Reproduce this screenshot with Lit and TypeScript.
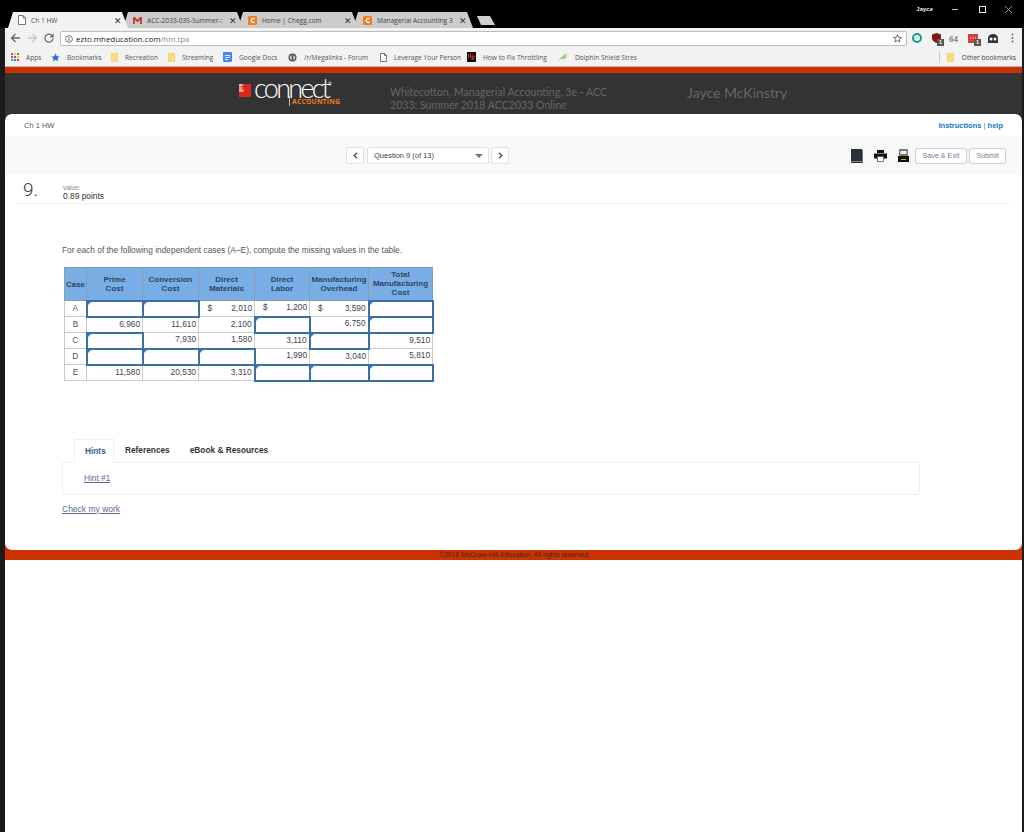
import { LitElement, html, css, svg } from 'lit';
import { customElement } from 'lit/decorators.js';
import { classMap } from 'lit/directives/class-map.js';

type IconName = 'page' | 'gmail' | 'chegg';

const TABS: { title: string; icon: IconName; active?: boolean }[] = [
  { title: 'Ch 1 HW', icon: 'page', active: true },
  { title: 'ACC-2033-03S-Summer-:', icon: 'gmail' },
  { title: 'Home | Chegg.com', icon: 'chegg' },
  { title: 'Managerial Accounting 3', icon: 'chegg' },
];

/** Bookmark bar entries: w is the slot width, so the labels land where Chrome put them. */
const BOOKMARKS: { label: string; icon: string; w: number }[] = [
  { label: 'Apps', icon: 'apps', w: 40 },
  { label: 'Bookmarks', icon: 'star', w: 60 },
  { label: 'Recreation', icon: 'folder', w: 57 },
  { label: 'Streaming', icon: 'folder', w: 55 },
  { label: 'Google Docs', icon: 'docs', w: 65 },
  { label: '/r/Megalinks - Forum', icon: 'disc', w: 92 },
  { label: 'Leverage Your Person', icon: 'page', w: 87 },
  { label: 'How to Fix Throttling', icon: 'ur', w: 91 },
  { label: 'Dolphin Shield Stres', icon: 'leaf', w: 90 },
];

const COLS = [22, 56, 56, 56, 55, 59, 64];

/** null marks an input cell; a dollar amount is written as ['$', value]. */
const ROWS: (string | null | [string, string])[][] = [
  ['A', null, null, ['$', '2,010'], ['$', '1,200'], ['$', '3,590'], null],
  ['B', '6,960', '11,610', '2,100', null, '6,750', null],
  ['C', null, '7,930', '1,580', '3,110', null, '9,510'],
  ['D', null, null, null, '1,990', '3,040', '5,810'],
  ['E', '11,580', '20,530', '3,310', null, null, null],
];

@customElement('app-root')
export class AppRoot extends LitElement {
  static styles = css`
    :host {
      display: block;
      width: 1024px;
      height: 832px;
      overflow: hidden;
      font-family: 'Liberation Sans', Arial, sans-serif;
      background: #fff;
    }
    .frame {
      display: flex;
      flex-direction: column;
      height: 832px;
      background: #1b1b1b;
    }
    /* window title bar and tabs */
    .titlebar {
      display: flex;
      align-items: flex-end;
      height: 28px;
      padding-left: 8px;
      background: #000;
      position: relative;
    }
    .tab {
      display: flex;
      align-items: center;
      box-sizing: border-box;
      width: 120px;
      height: 16px;
      margin-right: -5px;
      padding: 0 6px 0 10px;
      background: #cccccc;
      clip-path: polygon(5px 0, 114px 0, 120px 100%, 0 100%);
      font: 6.6px 'Open Sans', sans-serif;
      color: #444;
      white-space: nowrap;
    }
    .tab.active {
      background: #f2f2f2;
      position: relative;
      z-index: 1;
    }
    .tab .name {
      flex: 1;
      min-width: 0;
      overflow: hidden;
      margin-left: 5px;
    }
    .tab .x {
      font-size: 8.5px;
      color: #333;
      margin-left: 4px;
    }
    .newtab {
      width: 18px;
      height: 9px;
      margin: 0 0 3px 9px;
      background: #cfcfcf;
      clip-path: polygon(0 0, 13px 0, 18px 100%, 4px 100%);
    }
    .winctl {
      position: absolute;
      top: 0;
      right: 0;
      height: 18px;
      display: flex;
      align-items: center;
      color: #ddd;
    }
    .winctl .user {
      font-size: 6px;
      font-weight: 700;
      color: #eee;
      margin-right: 19px;
    }
    .winctl .min {
      width: 6px;
      height: 1px;
      background: #ccc;
      margin-right: 21px;
    }
    .winctl .max {
      width: 5px;
      height: 5px;
      border: 1px solid #eee;
      margin-right: 19px;
    }
    .winctl svg {
      margin-right: 12px;
    }

    /* toolbar */
    .chrome {
      margin: 0 2px 0 5px;
      background: #f2f2f2;
    }
    .toolbar {
      display: flex;
      align-items: center;
      height: 20px;
    }
    .navs {
      display: flex;
      align-items: center;
      gap: 6px;
      width: 55px;
      padding-left: 5px;
      box-sizing: border-box;
    }
    .omni {
      display: flex;
      align-items: center;
      box-sizing: border-box;
      width: 847px;
      height: 15px;
      margin-top: 1px;
      padding: 0 4px 0 4px;
      background: #fff;
      border: 1px solid #bdbdbd;
      border-radius: 2px;
      font: 7.9px 'Open Sans', sans-serif;
      color: #222;
    }
    .omni .url {
      flex: 1;
      margin-left: 3px;
    }
    .omni .path {
      color: #888;
    }
    .exts {
      display: flex;
      align-items: center;
      flex: 1;
      padding-left: 5px;
      position: relative;
    }
    .exts > * {
      flex: none;
    }
    .ext-green {
      margin-right: 10px;
    }
    .ext-shield {
      margin-right: 8px;
    }
    .ext-adblock {
      margin-right: 10px;
    }
    .ext-ghost {
      margin-right: 13px;
    }
    .ext64 {
      font: 700 8px 'Open Sans', sans-serif;
      color: #8b8b8b;
      width: 12px;
      margin-right: 7px;
    }
    .badge-host {
      position: relative;
      display: flex;
    }
    .badge {
      position: absolute;
      right: -3px;
      bottom: -3px;
      width: 7px;
      height: 7px;
      background: #555;
      color: #fff;
      font: 700 5.5px/7px 'Liberation Sans', sans-serif;
      text-align: center;
    }

    /* bookmarks */
    .bookmarks {
      display: flex;
      align-items: center;
      height: 18px;
      padding-left: 6px;
      font: 6.6px 'Open Sans', sans-serif;
      color: #555;
      white-space: nowrap;
    }
    .bm {
      display: flex;
      align-items: center;
      gap: 7px;
      box-sizing: border-box;
      flex: none;
      overflow: hidden;
    }
    .bm span {
      overflow: hidden;
    }
    .bm-fill {
      flex: 1;
    }
    .bm-sep {
      width: 1px;
      height: 12px;
      background: #ccc;
      margin-right: 7px;
    }
    .bm-other {
      display: flex;
      align-items: center;
      gap: 8px;
      color: #444;
      margin-right: 6px;
    }

    /* site */
    .site {
      display: flex;
      flex-direction: column;
      flex: 1;
      margin: 0 2px 0 5px;
      background: #fff;
    }
    .redbar {
      height: 6px;
      background: #cc3300;
      border-top: 1px solid #b9b9b9;
    }
    .masthead {
      display: flex;
      height: 41px;
      background: #333333;
    }
    .logo {
      position: relative;
      display: flex;
      align-items: flex-start;
      width: 151px;
      margin-left: 234px;
      padding-top: 11px;
      box-sizing: border-box;
    }
    .logo .mh {
      width: 12px;
      height: 13px;
      background: #d8281c;
      color: #fff;
      font: 700 3px/3.2px 'Liberation Sans', sans-serif;
      overflow: hidden;
    }
    .logo .word {
      font: 300 27px/13px 'Lato', sans-serif;
      letter-spacing: -2.7px;
      color: #fff;
      margin-left: 3px;
      margin-top: -3px;
    }
    .logo sup {
      position: absolute;
      left: 89px;
      top: 8px;
      font: 5px 'Liberation Sans', sans-serif;
      color: #fff;
    }
    .logo .sub {
      position: absolute;
      left: 50px;
      top: 23px;
      padding: 1px 0 0 2px;
      border-left: 1px solid #bbb;
      font: 700 6.8px/9px 'Open Sans', sans-serif;
      color: #f47b20;
      letter-spacing: 0.2px;
    }
    .course {
      width: 297px;
      padding-top: 13px;
      font: 10.6px/13px 'Lato', sans-serif;
      color: #666;
    }
    .who {
      padding-top: 11px;
      font: 14px/18px 'Lato', sans-serif;
      color: #666;
    }
    .sheet-bg {
      display: flex;
      flex-direction: column;
      height: 436px;
      background: linear-gradient(#333 50%, #cc3300 50%);
    }
    .sheet {
      flex: 1;
      background: #fff;
      border-radius: 7px;
    }
    .crumbs {
      display: flex;
      justify-content: space-between;
      align-items: center;
      height: 22px;
      padding: 0 19px;
      font-size: 7.5px;
      color: #555;
    }
    .crumbs .links {
      color: #1276c2;
      font-weight: 700;
    }
    .crumbs .links i {
      font-style: normal;
      font-weight: 400;
      color: #777;
    }
    .qbar {
      display: flex;
      align-items: center;
      height: 39px;
      padding: 0 16px 0 341px;
      background: #f8f8f8;
    }
    .navbtn {
      display: flex;
      align-items: center;
      justify-content: center;
      box-sizing: border-box;
      width: 18px;
      height: 17px;
      background: #fff;
      border: 1px solid #e2e2e2;
      border-radius: 2px;
    }
    .select {
      display: flex;
      align-items: center;
      justify-content: space-between;
      box-sizing: border-box;
      width: 122px;
      height: 17px;
      margin: 0 2px 0 3px;
      padding: 0 5px 0 6px;
      background: #fff;
      border: 1px solid #e2e2e2;
      border-radius: 2px;
      font-size: 7.5px;
      color: #444;
    }
    .caret {
      width: 0;
      height: 0;
      border: 4px solid transparent;
      border-top: 4px solid #777;
      border-bottom: 0;
    }
    .tools {
      display: flex;
      align-items: center;
      margin-left: auto;
    }
    .tools svg {
      margin-right: 11px;
    }
    .tools svg:nth-child(3) {
      margin-right: 6px;
    }
    .btn {
      box-sizing: border-box;
      height: 16px;
      margin-right: 2px;
      background: #fff;
      border: 1px solid #cfcfcf;
      border-radius: 2px;
      font: 7.2px/14px 'Liberation Sans', sans-serif;
      color: #6d7f96;
      text-align: center;
    }
    .btn.save {
      width: 52px;
    }
    .btn.submit {
      width: 37px;
      margin-right: 0;
    }
    .qhead {
      display: flex;
      height: 29px;
      margin: 0 12px 0 13px;
      border-bottom: 1px solid #eeeeee;
      box-sizing: border-box;
    }
    .qnum {
      width: 45px;
      padding: 6px 0 0 5px;
      box-sizing: border-box;
      font: 300 19px/18px 'Roboto', sans-serif;
      color: #333;
    }
    .qval {
      padding-top: 9px;
      font-size: 8.4px;
      line-height: 10px;
      color: #333;
    }
    .qval small {
      display: block;
      font-size: 6.5px;
      line-height: 7px;
      color: #888;
    }
    .body {
      padding: 41px 0 0 57px;
    }
    .prompt {
      font-size: 8.35px;
      line-height: 10px;
      color: #555;
    }
    table {
      border-collapse: collapse;
      table-layout: fixed;
      width: 367px;
      margin: 12px 0 0 2px;
      font-size: 8.3px;
      color: #444;
    }
    th {
      box-sizing: border-box;
      height: 33px;
      padding: 0;
      background: #78ade6;
      border: 1px solid #8a9bb0;
      font-size: 8px;
      line-height: 9px;
      font-weight: 700;
      color: #2f4560;
    }
    td {
      box-sizing: border-box;
      height: 16px;
      padding: 0 2px 2px;
      border: 1px solid #c9c9c9;
      line-height: 10px;
      text-align: right;
      position: relative;
    }
    td.case {
      text-align: center;
      color: #555;
    }
    td.input {
      background: #fff;
      border: 2px solid #3b6fa8;
    }
    td.input::before {
      content: '';
      position: absolute;
      top: 0;
      left: 0;
      border-top: 3px solid #2f7fd0;
      border-right: 3px solid transparent;
      border-bottom: 3px solid transparent;
    }
    .money {
      display: flex;
      justify-content: space-between;
      padding-left: 6px;
    }
    .tabs {
      display: flex;
      margin: 57px 0 0 12px;
      font-size: 8.3px;
      font-weight: 700;
      color: #333;
    }
    .tabs div {
      box-sizing: border-box;
      height: 24px;
      line-height: 23px;
      padding: 0 10px;
    }
    .tabs .on {
      width: 40px;
      margin-right: 1px;
      border: 1px solid #eeeeee;
      border-bottom: 1px solid #fff;
      color: #3a5a8c;
      position: relative;
      z-index: 1;
    }
    .panel {
      box-sizing: border-box;
      width: 858px;
      height: 33px;
      margin-top: -1px;
      padding: 10px 0 0 21px;
      border: 1px solid #eeeeee;
      border-radius: 2px;
      font-size: 8.3px;
      line-height: 10px;
    }
    .panel a {
      color: #7a5a96;
      text-decoration: underline;
    }
    .check {
      display: block;
      margin-top: 9px;
      font-size: 8.5px;
      line-height: 10px;
      color: #5a6c8c;
      text-decoration: underline;
    }
    .footer {
      box-sizing: border-box;
      height: 10px;
      padding-left: 434px;
      background: #cc3300;
      font-size: 6.8px;
      line-height: 10px;
      color: #3a2a20;
    }
    .rest {
      flex: 1;
      background: #fff;
    }
  `;

  private _tabIcon(name: IconName) {
    if (name === 'gmail')
      return html`<svg width="9" height="7" viewBox="0 0 10 8">
        <path d="M0 0h2l3 3 3-3h2v8H8V3L5 6 2 3v5H0z" fill="#c5342a" />
      </svg>`;
    if (name === 'chegg')
      return html`<svg width="9" height="9" viewBox="0 0 9 9">
        <rect width="9" height="9" rx="1.5" fill="#f47b20" />
        <path d="M6.5 3A2 2 0 1 0 6.5 6" fill="none" stroke="#fff" stroke-width="1.4" />
      </svg>`;
    return html`<svg width="8" height="10" viewBox="0 0 8 10">
      <path d="M.5.5h4.500l2.500 2.500v6.500h-7zM5 .5v2.500h2.500" fill="#fff" stroke="#555" stroke-width=".8" />
    </svg>`;
  }

  private _bmIcon(name: string) {
    switch (name) {
      case 'apps': {
        const colors = ['#e53935', '#fbc02d', '#43a047', '#1e88e5', '#e53935', '#fbc02d', '#43a047', '#1e88e5', '#e53935'];
        return html`<svg width="8" height="8" viewBox="0 0 8 8">
          ${colors.map(
            (c, i) => svg`<rect x=${(i % 3) * 3} y=${Math.floor(i / 3) * 3} width="2" height="2" fill=${c} />`
          )}
        </svg>`;
      }
      case 'star':
        return html`<svg width="9" height="9" viewBox="0 0 10 10">
          <path d="M5 .5l1.400 3 3.300.3-2.500 2.200.8 3.300L5 7.500 2 9.300l.8-3.300L.3 3.800l3.300-.3z" fill="#2a6fd6" />
        </svg>`;
      case 'folder':
        return html`<svg width="7" height="9" viewBox="0 0 7 9"><rect width="7" height="9" fill="#f7dc81" stroke="#e5c65c" stroke-width=".5" /></svg>`;
      case 'docs':
        return html`<svg width="9" height="10" viewBox="0 0 9 10">
          <rect width="9" height="10" rx="1" fill="#4285f4" />
          <path d="M2 3.500h5M2 5.500h5M2 7.500h3" stroke="#fff" stroke-width=".9" />
        </svg>`;
      case 'disc':
        return html`<svg width="9" height="9" viewBox="0 0 9 9">
          <circle cx="4.500" cy="4.500" r="4" fill="#555" />
          <circle cx="4.500" cy="4.500" r="2.600" fill="#ddd" />
          <rect x="3.600" y="2" width="1.800" height="5" fill="#555" />
        </svg>`;
      case 'page':
        return html`<svg width="7" height="9" viewBox="0 0 7 9">
          <path d="M.5.5h4l2 2v6h-6zM4.500 .5v2h2" fill="#fff" stroke="#444" stroke-width=".7" />
        </svg>`;
      case 'ur':
        return html`<svg width="9" height="10" viewBox="0 0 9 10">
          <rect width="9" height="10" fill="#111" />
          <path d="M1.500 2v3h2V2M5 8V4h2v2H5l2 2" fill="none" stroke="#d33" stroke-width=".9" />
        </svg>`;
      default:
        return html`<svg width="10" height="8" viewBox="0 0 10 8">
          <path d="M0 7L9 0 7 4 10 3 5 7 6 5z" fill="#8fc76a" />
        </svg>`;
    }
  }

  private _chrome() {
    return html`
      <div class="titlebar">
        ${TABS.map(
          (t) => html`<div class=${classMap({ tab: true, active: !!t.active })}>
            ${this._tabIcon(t.icon)}<span class="name">${t.title}</span><span class="x">✕</span>
          </div>`
        )}
        <div class="newtab"></div>
        <div class="winctl">
          <span class="user">Jayce</span>
          <span class="min"></span>
          <span class="max"></span>
          <svg width="7" height="7" viewBox="0 0 7 7"><path d="M0 0l7 7M7 0L0 7" stroke="#bbb" stroke-width=".8" /></svg>
        </div>
      </div>
      <div class="chrome">
        <div class="toolbar">
          <div class="navs">
            <svg width="11" height="10" viewBox="0 0 11 10"><path d="M10 5H2M5.500 1L1.500 5l4 4" fill="none" stroke="#666" stroke-width="1.300" /></svg>
            <svg width="11" height="10" viewBox="0 0 11 10"><path d="M1 5h8M5.500 1l4 4-4 4" fill="none" stroke="#c8c8c8" stroke-width="1.300" /></svg>
            <svg width="10" height="10" viewBox="0 0 10 10"><path d="M8.500 3.200A4 4 0 1 0 9 5.500M9 .8v3H6" fill="none" stroke="#666" stroke-width="1.200" /></svg>
          </div>
          <div class="omni">
            <svg width="8" height="8" viewBox="0 0 8 8">
              <circle cx="4" cy="4" r="3.400" fill="none" stroke="#555" stroke-width=".8" />
              <path d="M4 3.400v2.600M4 2v.9" stroke="#555" />
            </svg>
            <span class="url">ezto.mheducation.com<span class="path">/hm.tpx</span></span>
            <svg width="9" height="9" viewBox="0 0 10 10">
              <path d="M5 .8l1.300 2.800 3 .3-2.300 2 .7 3L5 7.300 2.300 8.900l.7-3-2.300-2 3-.3z" fill="none" stroke="#444" stroke-width=".9" />
            </svg>
          </div>
          <div class="exts">
            <svg class="ext-green" width="10" height="10" viewBox="0 0 10 10">
              <circle cx="5" cy="5" r="4" fill="none" stroke="#12a08a" stroke-width="2" />
              <rect x="3.500" y="3.500" width="3" height="2.500" fill="#bfe6df" />
            </svg>
            <span class="badge-host ext-shield">
              <svg width="9" height="10" viewBox="0 0 9 10"><path d="M4.500 0L9 1.500V5c0 2.500-2 4-4.500 5C2 9 0 7.500 0 5V1.500z" fill="#8c1414" /></svg>
              <span class="badge">1</span>
            </span>
            <span class="ext64">64</span>
            <span class="badge-host ext-adblock">
              <svg width="10" height="9" viewBox="0 0 10 9">
                <rect width="10" height="9" fill="#e03b3b" />
                <path d="M2 4h1M4.500 4h1M7 4h1" stroke="#fff" />
              </svg>
              <span class="badge">1</span>
            </span>
            <svg class="ext-ghost" width="10" height="9" viewBox="0 0 10 9">
              <path d="M0 4a5 4 0 0 1 10 0v5H0z" fill="#333" />
              <circle cx="3" cy="5" r="1.500" fill="#fff" />
              <circle cx="7" cy="5" r="1.500" fill="#fff" />
            </svg>
            <svg width="3" height="10" viewBox="0 0 3 10">
              <circle cx="1.500" cy="1.500" r="1" fill="#666" />
              <circle cx="1.500" cy="5" r="1" fill="#666" />
              <circle cx="1.500" cy="8.500" r="1" fill="#666" />
            </svg>
          </div>
        </div>
        <div class="bookmarks">
          ${BOOKMARKS.map(
            (b) => html`<div class="bm" style="width:${b.w}px">${this._bmIcon(b.icon)}<span>${b.label}</span></div>`
          )}
          <div class="bm-fill"></div>
          <div class="bm-sep"></div>
          <div class="bm-other">${this._bmIcon('folder')}<span>Other bookmarks</span></div>
        </div>
      </div>
    `;
  }

  private _cell(value: string | null | [string, string]) {
    if (value === null) return html`<td class="input"></td>`;
    if (Array.isArray(value))
      return html`<td><div class="money"><span>${value[0]}</span><span>${value[1]}</span></div></td>`;
    return html`<td>${value}</td>`;
  }

  private _table() {
    return html`
      <table>
        <colgroup>${COLS.map((w) => html`<col style="width:${w}px" />`)}</colgroup>
        <thead>
          <tr>
            <th>Case</th>
            <th>Prime<br />Cost</th>
            <th>Conversion<br />Cost</th>
            <th>Direct<br />Materials</th>
            <th>Direct<br />Labor</th>
            <th>Manufacturing<br />Overhead</th>
            <th>Total<br />Manufacturing<br />Cost</th>
          </tr>
        </thead>
        <tbody>
          ${ROWS.map(
            (row) => html`<tr>
              <td class="case">${row[0]}</td>
              ${row.slice(1).map((v) => this._cell(v))}
            </tr>`
          )}
        </tbody>
      </table>
    `;
  }

  render() {
    return html`
      <div class="frame">
        ${this._chrome()}
        <div class="site">
          <div class="redbar"></div>
          <div class="masthead">
            <div class="logo">
              <div class="mh">Mc<br />Gr<br />Hill</div>
              <div class="word">connect</div>
              <sup>®</sup>
              <div class="sub">ACCOUNTING</div>
            </div>
            <div class="course">Whitecotton, Managerial Accounting, 3e - ACC<br />2033: Summer 2018 ACC2033 Online</div>
            <div class="who">Jayce McKinstry</div>
          </div>
          <div class="sheet-bg">
            <div class="sheet">
              <div class="crumbs">
                <span>Ch 1 HW</span>
                <span class="links">Instructions <i>|</i> help</span>
              </div>
              <div class="qbar">
                <div class="navbtn">
                  <svg width="5" height="7" viewBox="0 0 5 7"><path d="M4 .8L1.200 3.500 4 6.200" fill="none" stroke="#2c4a78" stroke-width="1.300" /></svg>
                </div>
                <div class="select"><span>Question 9 (of 13)</span><span class="caret"></span></div>
                <div class="navbtn">
                  <svg width="5" height="7" viewBox="0 0 5 7"><path d="M1 .8l2.800 2.700L1 6.200" fill="none" stroke="#2c4a78" stroke-width="1.300" /></svg>
                </div>
                <div class="tools">
                  <svg width="12" height="14" viewBox="0 0 12 14">
                    <rect width="11" height="14" fill="#2b2f36" />
                    <rect x="11" y="1" width="1" height="13" fill="#5a7090" />
                    <rect y="12" width="11" height="1" fill="#888" />
                  </svg>
                  <svg width="13" height="12" viewBox="0 0 13 12">
                    <rect x="3" y="0" width="7" height="3" fill="#111" />
                    <rect x="0" y="3.500" width="13" height="5" fill="#111" />
                    <rect x="3.500" y="6.500" width="6" height="5" fill="#fff" stroke="#8c1c6a" stroke-width=".7" />
                  </svg>
                  <svg width="11" height="14" viewBox="0 0 11 14">
                    <rect x="1" y="0" width="9" height="7" rx="1" fill="#777" />
                    <rect x="2.500" y="2" width="6" height="3" fill="#eee" />
                    <rect x="0" y="7" width="11" height="6" fill="#111" />
                    <rect x="3" y="10" width="5" height="1" fill="#f2a31b" />
                  </svg>
                  <div class="btn save">Save &amp; Exit</div>
                  <div class="btn submit">Submit</div>
                </div>
              </div>
              <div class="qhead">
                <div class="qnum">9.</div>
                <div class="qval"><small>value:</small>0.89 points</div>
              </div>
              <div class="body">
                <div class="prompt">For each of the following independent cases (A–E), compute the missing values in the table.</div>
                ${this._table()}
                <div class="tabs">
                  <div class="on">Hints</div>
                  <div>References</div>
                  <div>eBook &amp; Resources</div>
                </div>
                <div class="panel"><a>Hint #1</a></div>
                <a class="check">Check my work</a>
              </div>
            </div>
          </div>
          <div class="footer">©2018 McGraw-Hill Education. All rights reserved.</div>
          <div class="rest"></div>
        </div>
      </div>
    `;
  }
}
